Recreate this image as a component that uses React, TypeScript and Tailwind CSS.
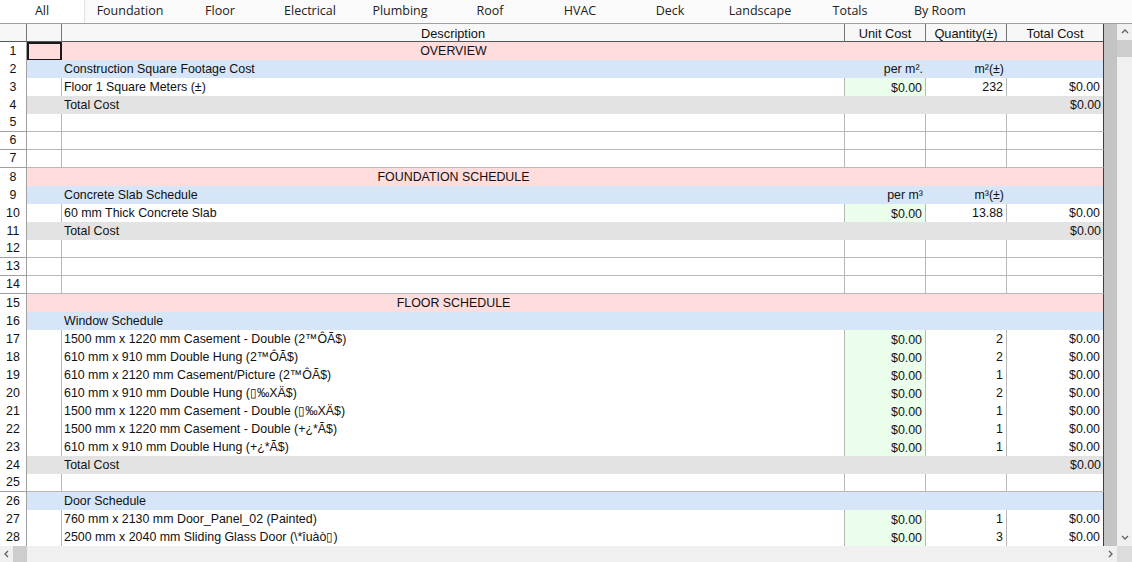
import React from "react";

type Row =
  | { t: "section"; title: string }
  | { t: "sub"; label: string; unit?: string; qty?: string }
  | { t: "data"; label: string; unit: string; qty: string; total: string }
  | { t: "total" }
  | { t: "empty" };

const rows: Row[] = [
  { t: "section", title: "OVERVIEW" },
  { t: "sub", label: "Construction Square Footage Cost", unit: "per m².", qty: "m²(±)" },
  { t: "data", label: "Floor 1 Square Meters (±)", unit: "$0.00", qty: "232", total: "$0.00" },
  { t: "total" },
  { t: "empty" },
  { t: "empty" },
  { t: "empty" },
  { t: "section", title: "FOUNDATION SCHEDULE" },
  { t: "sub", label: "Concrete Slab Schedule", unit: "per m³", qty: "m³(±)" },
  { t: "data", label: "60 mm Thick Concrete Slab", unit: "$0.00", qty: "13.88", total: "$0.00" },
  { t: "total" },
  { t: "empty" },
  { t: "empty" },
  { t: "empty" },
  { t: "section", title: "FLOOR SCHEDULE" },
  { t: "sub", label: "Window Schedule" },
  { t: "data", label: "1500 mm x 1220 mm Casement - Double (2™ÔÃ$)", unit: "$0.00", qty: "2", total: "$0.00" },
  { t: "data", label: "610 mm x 910 mm Double Hung (2™ÔÃ$)", unit: "$0.00", qty: "2", total: "$0.00" },
  { t: "data", label: "610 mm x 2120 mm Casement/Picture (2™ÔÃ$)", unit: "$0.00", qty: "1", total: "$0.00" },
  { t: "data", label: "610 mm x 910 mm Double Hung (\u25AF‰XÄ$)", unit: "$0.00", qty: "2", total: "$0.00" },
  { t: "data", label: "1500 mm x 1220 mm Casement - Double (\u25AF‰XÄ$)", unit: "$0.00", qty: "1", total: "$0.00" },
  { t: "data", label: "1500 mm x 1220 mm Casement - Double (+¿*Ã$)", unit: "$0.00", qty: "1", total: "$0.00" },
  { t: "data", label: "610 mm x 910 mm Double Hung (+¿*Ã$)", unit: "$0.00", qty: "1", total: "$0.00" },
  { t: "total" },
  { t: "empty" },
  { t: "sub", label: "Door Schedule" },
  { t: "data", label: "760 mm x 2130 mm Door_Panel_02 (Painted)", unit: "$0.00", qty: "1", total: "$0.00" },
  { t: "data", label: "2500 mm x 2040 mm Sliding Glass Door (\\*îuàò\u25AF)", unit: "$0.00", qty: "3", total: "$0.00" },
];

const tabs = ["All", "Foundation", "Floor", "Electrical", "Plumbing", "Roof", "HVAC", "Deck", "Landscape", "Totals", "By Room"];

const ROW = "grid grid-cols-[27px_35px_783px_81px_81px_97px] h-[18px]";
const INNER = "grid grid-cols-[35px_783px_81px_81px_97px] col-span-5 h-full";

function Num({ n }: { n: number }) {
  return (
    <div className="border-r border-b border-[#a0a0a0] flex items-center justify-center bg-white leading-none">
      {n}
    </div>
  );
}

function Chevron({ dir }: { dir: "up" | "down" | "left" | "right" }) {
  const d =
    dir === "up"
      ? "M1 5 L4 2 L7 5"
      : dir === "down"
      ? "M1 2 L4 5 L7 2"
      : dir === "left"
      ? "M5 1 L2 4 L5 7"
      : "M2 1 L5 4 L2 7";
  return (
    <svg width="8" height="8" viewBox="0 0 8 8">
      <path d={d} fill="none" stroke="#606060" strokeWidth="1.3" />
    </svg>
  );
}

function RowView({ row, n }: { row: Row; n: number }) {
  if (row.t === "section") {
    return (
      <div className={ROW}>
        <Num n={n} />
        <div className={`${INNER} bg-[#ffdddd] border-r border-[#3c3c3c]`}>
          <div className="h-full">
            {n === 1 && <div className="h-full w-full border-2 border-[#1a1a1a]" />}
          </div>
          <div className="flex items-center justify-center">{row.title}</div>
        </div>
      </div>
    );
  }
  if (row.t === "sub") {
    return (
      <div className={ROW}>
        <Num n={n} />
        <div className={`${INNER} bg-[#d6e6f8] border-r border-[#3c3c3c]`}>
          <div />
          <div className="flex items-center pl-[2px]">{row.label}</div>
          <div className="flex items-center justify-end pr-[3px]">{row.unit ?? ""}</div>
          <div className="flex items-center justify-end pr-[3px]">{row.qty ?? ""}</div>
          <div />
        </div>
      </div>
    );
  }
  if (row.t === "total") {
    return (
      <div className={ROW}>
        <Num n={n} />
        <div className={`${INNER} bg-[#e3e3e3] border-r border-[#3c3c3c]`}>
          <div />
          <div className="flex items-center pl-[2px]">Total Cost</div>
          <div />
          <div />
          <div className="flex items-center justify-end pr-[3px]">$0.00</div>
        </div>
      </div>
    );
  }
  if (row.t === "data") {
    return (
      <div className={ROW}>
        <Num n={n} />
        <div className="bg-white border-r border-[#b8b8b8]" />
        <div className="bg-white border-r border-b border-[#b8b8b8] flex items-center pl-[2px] whitespace-nowrap">
          {row.label}
        </div>
        <div className="bg-[#ebfdeb] border-r border-[#b8b8b8] flex items-center justify-end pr-[3px]">{row.unit}</div>
        <div className="bg-white border-r border-b border-[#b8b8b8] flex items-center justify-end pr-[3px]">{row.qty}</div>
        <div className="bg-white border-r border-r-[#3c3c3c] border-b border-b-[#b8b8b8] flex items-center justify-end pr-[3px]">
          {row.total}
        </div>
      </div>
    );
  }
  return (
    <div className={ROW}>
      <Num n={n} />
      <div className="bg-white border-r border-b border-[#b8b8b8]" />
      <div className="bg-white border-r border-b border-[#b8b8b8]" />
      <div className="bg-white border-r border-b border-[#b8b8b8]" />
      <div className="bg-white border-r border-b border-[#b8b8b8]" />
      <div className="bg-white border-r border-r-[#3c3c3c] border-b border-b-[#b8b8b8]" />
    </div>
  );
}

export default function App() {
  return (
    <div
      className="w-[1132px] h-[562px] overflow-hidden bg-white flex flex-col text-[12.4px] text-[#111]"
      style={{ fontFamily: '"Liberation Sans", Arial, sans-serif' }}
    >
      {/* Tab bar */}
      <div
        className="h-[24px] flex border-b border-[#a0a0a0] bg-[#fafafa] text-[12.5px] text-[#222]"
        style={{ fontFamily: '"Open Sans", "Noto Sans", sans-serif' }}
      >
        {tabs.map((t, i) => (
          <div
            key={t}
            className={
              i === 0
                ? "w-[85px] flex items-center justify-center bg-white border-r border-[#e2e2e2]"
                : "w-[90px] flex items-center justify-center"
            }
          >
            {t}
          </div>
        ))}
      </div>

      {/* Middle */}
      <div className="flex h-[522px]">
        <div className="w-[1104px] flex flex-col">
          {/* header */}
          <div className="grid grid-cols-[27px_35px_783px_81px_81px_97px] h-[18px] bg-[#f7f7f7] border-b border-[#555] text-[12.8px]">
            <div className="border-r border-[#777]" />
            <div className="border-r border-[#777]" />
            <div className="border-r border-[#777] flex items-center justify-center">Description</div>
            <div className="border-r border-[#777] flex items-center justify-center">Unit Cost</div>
            <div className="border-r border-[#777] flex items-center justify-center">Quantity(±)</div>
            <div className="border-r border-[#3c3c3c] flex items-center justify-center">Total Cost</div>
          </div>
          {rows.map((r, i) => (
            <RowView key={i} row={r} n={i + 1} />
          ))}
        </div>
        <div className="w-[13px] bg-[#c4c4c4]" />
        <div className="w-[15px] bg-[#f0f0f0] flex flex-col">
          <div className="h-[16px] flex items-center justify-center">
            <Chevron dir="up" />
          </div>
          <div className="h-[17px] bg-[#cdcdcd]" />
          <div className="flex-1" />
          <div className="h-[16px] flex items-center justify-center">
            <Chevron dir="down" />
          </div>
        </div>
      </div>

      {/* Horizontal scrollbar */}
      <div className="flex h-[16px]">
        <div className="w-[1117px] bg-[#f0f0f0] flex">
          <div className="w-[13px] flex items-center justify-center">
            <Chevron dir="left" />
          </div>
          <div className="w-[14px] bg-[#cdcdcd]" />
          <div className="flex-1" />
          <div className="w-[13px] flex items-center justify-center">
            <Chevron dir="right" />
          </div>
        </div>
        <div className="w-[15px] bg-[#dcdcdc]" />
      </div>
    </div>
  );
}
